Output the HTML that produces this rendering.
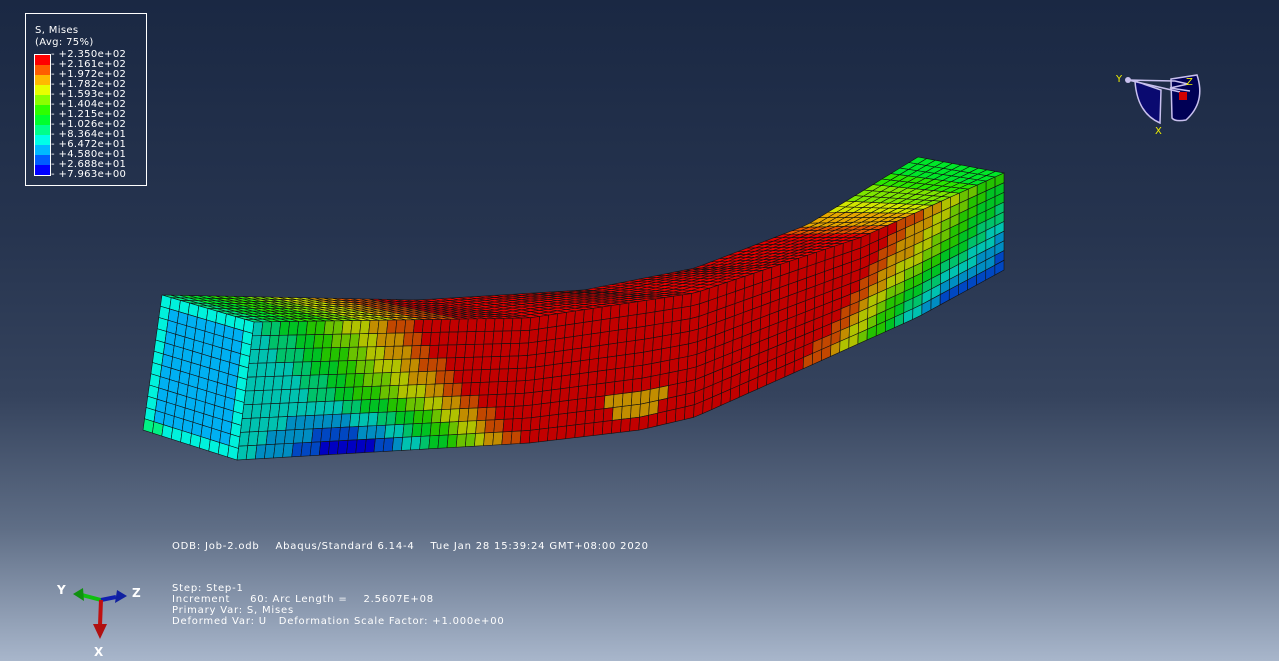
<!DOCTYPE html>
<html><head><meta charset="utf-8"><style>
html,body{margin:0;padding:0}
body{width:1279px;height:661px;overflow:hidden;position:relative;
background:linear-gradient(to bottom,#1a2843 0%,#26344f 35%,#35435d 60%,#5f6e86 80%,#a8b6cb 100%);
font-family:"DejaVu Sans",sans-serif;color:#fff}
.t{position:absolute;font-size:10px;white-space:pre;line-height:11px;letter-spacing:0.35px;font-family:"DejaVu Sans",sans-serif}
.b{letter-spacing:0.8px}
#leg{position:absolute;left:25px;top:13px;width:120px;height:171px;border:1px solid #fff}
</style></head><body>
<div id="leg"></div>
<div class="t" style="left:35px;top:25px">S, Mises</div>
<div class="t" style="left:35px;top:37px">(Avg: 75%)</div>
<div id="bar" style="position:absolute;left:35px;top:55px;width:15px"></div>
<div id="vals"></div>

<svg id="beam" width="1279" height="661" style="position:absolute;left:0;top:0"></svg>

<svg width="1279" height="661" style="position:absolute;left:0;top:0">
 <path d="M1135,81 Q1137,113 1160,123 L1161,90 Z" fill="#0a0a70" stroke="#c8c0ee" stroke-width="1.5"/>
 <path d="M1171,79 L1197,75 Q1206,102 1186,120 Q1175,122 1172,118 Z" fill="#000055" stroke="#c8c0ee" stroke-width="1.5"/>
 <path d="M1128,80 L1175,81 L1188,84 L1170,88 L1190,91 M1128,80 L1163,88 L1180,92" fill="none" stroke="#c8c0ee" stroke-width="1.5"/>
 <circle cx="1128" cy="80" r="3" fill="#c8c0ee"/>
 <rect x="1179" y="92" width="8" height="8" fill="#d00000"/>
 <text x="1116" y="82" font-size="10" fill="#f0f000" font-family="DejaVu Sans">Y</text>
 <text x="1186" y="85" font-size="10" fill="#f0f000" font-family="DejaVu Sans">Z</text>
 <text x="1155" y="134" font-size="10" fill="#f0f000" font-family="DejaVu Sans">X</text>
 <line x1="101" y1="600" x2="82" y2="595" stroke="#10c010" stroke-width="4"/>
 <polygon points="73,594 83,588 84,601" fill="#109010"/>
 <line x1="101" y1="600" x2="116" y2="597" stroke="#1020b0" stroke-width="4"/>
 <polygon points="127,596 117,590 115,603" fill="#1020a0"/>
 <line x1="101" y1="600" x2="100" y2="625" stroke="#c01010" stroke-width="4"/>
 <polygon points="93,624 107,624 100,639" fill="#b01010"/>
 <text x="57" y="594" font-size="12" font-weight="bold" fill="#fff" font-family="DejaVu Sans">Y</text>
 <text x="132" y="597" font-size="12" font-weight="bold" fill="#fff" font-family="DejaVu Sans">Z</text>
 <text x="94" y="656" font-size="12" font-weight="bold" fill="#fff" font-family="DejaVu Sans">X</text>
</svg>

<div class="t b" style="left:172px;top:541px">ODB: Job-2.odb    Abaqus/Standard 6.14-4    Tue Jan 28 15:39:24 GMT+08:00 2020</div>
<div class="t b" style="left:172px;top:583px">Step: Step-1</div>
<div class="t b" style="left:172px;top:594px">Increment     60: Arc Length =    2.5607E+08</div>
<div class="t b" style="left:172px;top:605px">Primary Var: S, Mises</div>
<div class="t b" style="left:172px;top:616px">Deformed Var: U   Deformation Scale Factor: +1.000e+00</div>

<script>
var pal=["#0000ff","#005dff","#00b9ff","#00ffe8","#00ff8b","#00ff2e","#2eff00","#8bff00","#e8ff00","#ffb900","#ff5d00","#ff0000"];
var vals=["+2.350e+02","+2.161e+02","+1.972e+02","+1.782e+02","+1.593e+02","+1.404e+02","+1.215e+02","+1.026e+02","+8.364e+01","+6.472e+01","+4.580e+01","+2.688e+01","+7.963e+00"];
var bar=document.getElementById('bar'),h='';
for(var i=11;i>=0;i--)h+='<div style="height:10px;background:'+pal[i]+'"></div>';
bar.innerHTML=h;bar.style.outline='1px solid #fff';
var vh='';for(var i=0;i<13;i++){vh+='<div class="t" style="left:51px;top:'+(49+i*10)+'px">- '+vals[i]+'</div>';}
document.getElementById('vals').innerHTML=vh;

function pw(pts,x){for(var i=0;i<pts.length-1;i++){if(x<=pts[i+1][0]){var a=pts[i],b=pts[i+1];var f=(x-a[0])/(b[0]-a[0]);return a[1]+f*(b[1]-a[1]);}}return pts[pts.length-1][1];}
var topF=[[254,322],[529,318],[695,293],[862,237],[1004,173]];
var bot=[[237,460],[529,443],[640,430],[695,417],[807,367],[918,317],[1004,270]];
var back=[[162,295],[418,300],[584,290],[695,268],[807,225],[918,157]];
function P(edge,x0,x1,t){var x=x0+t*(x1-x0);return [x,pw(edge,x)];}
function col(v,sh){v=Math.max(0,Math.min(0.999,v));var c=pal[Math.floor(v*12)];
 var r=parseInt(c.substr(1,2),16),g=parseInt(c.substr(3,2),16),b=parseInt(c.substr(5,2),16);
 return 'rgb('+Math.round(r*sh)+','+Math.round(g*sh)+','+Math.round(b*sh)+')';}
function cl(x){return Math.max(0,Math.min(1,x));}
function sideV(t,s){
 var d=t-0.16*s;var v;
 if(d>0.23)v=1;else v=0.33+cl(d/0.23)*0.67;
 var w=t-0.84+0.13*s; if(w>0)v=Math.min(v,1-w*3.1);
 var bl=Math.max(0,(s-0.55)/0.45)*Math.exp(-Math.pow((t-0.17)/0.13,2));v-=0.35*bl;
 var br=Math.max(0,(s-0.45)/0.55)*Math.exp(-Math.pow((t-0.9)/0.07,2));v-=0.25*br;
 var yp=Math.exp(-Math.pow((t-0.52)/0.05,2)-Math.pow((s-0.78)/0.14,2));if(yp>0.5)v=Math.min(v,0.77);
 return v;}
function topV(t){var v; if(t<0.3)v=0.4+t/0.3*0.6;else if(t<0.8)v=1;else v=1-(t-0.8)/0.2*0.58;return v;}
var svg='',N=84,R=10;
for(var i=0;i<N;i++)for(var j=0;j<R;j++){
 var t0=i/N,t1=(i+1)/N,s0=j/R,s1=(j+1)/R;
 function q(t,s){var a=P(back,162,918,t),b=P(topF,254,1004,t);return [a[0]+(b[0]-a[0])*s,a[1]+(b[1]-a[1])*s];}
 var p=[q(t0,s0),q(t1,s0),q(t1,s1),q(t0,s1)];
 svg+='<polygon points="'+p.join(' ')+'" fill="'+col(topV((t0+t1)/2)-0.02,0.9)+'" stroke="#111" stroke-width="0.6"/>';}
for(var i=0;i<N;i++)for(var j=0;j<R;j++){
 var t0=i/N,t1=(i+1)/N,s0=j/R,s1=(j+1)/R;
 function q2(t,s){var a=P(topF,254,1004,t),b=P(bot,237,1004,t);return [a[0]+(b[0]-a[0])*s,a[1]+(b[1]-a[1])*s];}
 var p=[q2(t0,s0),q2(t1,s0),q2(t1,s1),q2(t0,s1)];
 svg+='<polygon points="'+p.join(' ')+'" fill="'+col(sideV((t0+t1)/2,(s0+s1)/2),0.76)+'" stroke="#111" stroke-width="0.6"/>';}
var A=[162,295],B=[254,322],C=[237,460],D=[143,430];
function q3(u,s){var top=[A[0]+(B[0]-A[0])*u,A[1]+(B[1]-A[1])*u],bt=[D[0]+(C[0]-D[0])*u,D[1]+(C[1]-D[1])*u];return [top[0]+(bt[0]-top[0])*s,top[1]+(bt[1]-top[1])*s];}
for(var i=0;i<10;i++)for(var j=0;j<12;j++){
 var u0=i/10,u1=(i+1)/10,s0=j/12,s1=(j+1)/12;
 var edge=(i==0||i==9||j==0||j==11);
 var v=edge?0.29:0.21; if(j==11&&i<2)v=0.4;
 var p=[q3(u0,s0),q3(u1,s0),q3(u1,s1),q3(u0,s1)];
 svg+='<polygon points="'+p.join(' ')+'" fill="'+col(v,0.95)+'" stroke="#111" stroke-width="0.6"/>';}
document.getElementById('beam').innerHTML=svg;
</script>
</body></html>
